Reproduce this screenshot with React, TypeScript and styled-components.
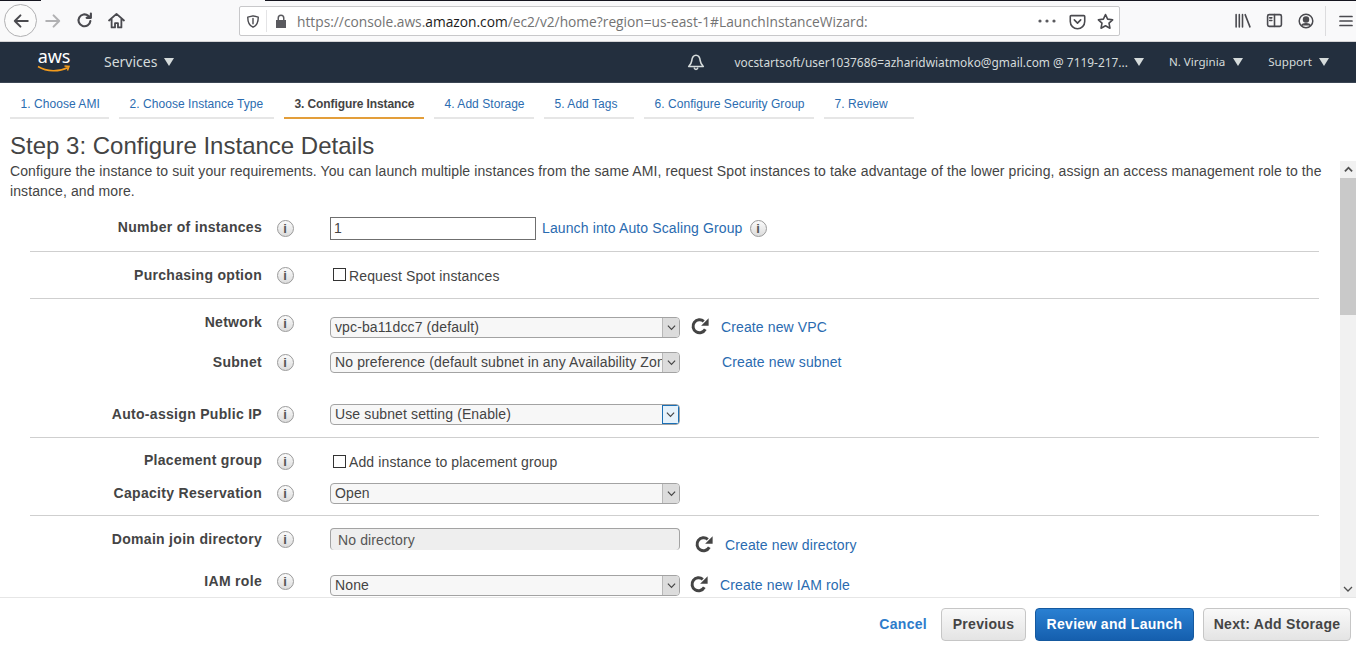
import React from 'react';
import styled, { createGlobalStyle } from 'styled-components';

const Global = createGlobalStyle`
  html, body { margin: 0; padding: 0; background: #fff; overflow: hidden; }
  * { box-sizing: border-box; }
  body { font-family: "Liberation Sans", Arial, sans-serif; color: #444; }
`;
const Page = styled.div`width: 1356px; height: 654px; display: flex; flex-direction: column; overflow: hidden; background: #fff;`;

/* Browser chrome */
const Browser = styled.div`
  height: 42px; flex: none; display: flex; align-items: center; padding-left: 4px;
  background: linear-gradient(to right, #15151f 0 41px, transparent 41px 265px, #15151f 265px) top / 100% 1px no-repeat, #f9f9fa;
  border-bottom: 1px solid #d4d4d6; color: #4a4a4f;
`;
const BackCircle = styled.div`width: 33px; height: 33px; border-radius: 50%; border: 1px solid #b1b1b3; background: #fbfbfb; display: flex; align-items: center; justify-content: center; flex: none;`;
const ToolSlot = styled.div<{ $w: number; $muted?: boolean }>`
  width: ${p => p.$w}px; flex: none; display: flex; align-items: center; justify-content: center;
  color: ${p => (p.$muted ? '#b1b1b3' : 'inherit')};
`;
const UrlBar = styled.div`
  margin-left: 107px; margin-right: 106px; width: 881px; height: 30px; background: #fff; border: 1px solid #c8c8ca; border-radius: 2px;
  display: flex; align-items: center; padding-left: 6px; flex: none; margin-top: 1px;
`;
const UrlDivider = styled.div`width: 1px; height: 22px; background: #e4e4e6; margin: 0 8px 0 6px;`;
const UrlText = styled.div`
  font-family: "Open Sans", "Noto Sans", sans-serif; font-size: 13.75px; color: #737373; margin-left: 10px; flex: 1; white-space: nowrap;
  b { font-weight: 400; color: #1a1a1a; }
`;
const UrlActions = styled.div`display: flex; align-items: center; gap: 11px; padding-right: 5px; color: #4a4a4f;`;
const Dots = styled.svg`margin-right: 2px;`;
const RightTools = styled.div`display: flex; align-items: center; color: #4a4a4f;`;
const ChromeSep = styled.div`width: 1px; height: 30px; background: #dcdcde; margin: 0 12px 0 3px;`;

/* AWS nav */
const Nav = styled.nav`
  height: 41px; flex: none; background: #232f3e; border-bottom: 1px solid #3a4553; display: flex; align-items: center; color: #d5dbdb;
  font-family: "Noto Sans", "Open Sans", sans-serif; font-size: 11.6px; padding-bottom: 1px;
`;
const Logo = styled.div`margin-left: 37px; width: 34px; height: 26px; flex: none; margin-top: -2px;`;
const LogoText = styled.span`display: block; color: #fff; font-family: "Noto Sans", sans-serif; font-size: 18px; line-height: 17px; text-align: center; letter-spacing: -0.2px;`;
const LogoSmile = styled.svg`display: block;`;
const NavItem = styled.div<{ $ml?: number; $size?: number }>`
  display: flex; align-items: center; white-space: nowrap; margin-left: ${p => p.$ml ?? 0}px;
  font-size: ${p => p.$size ?? 11.6}px;
`;
const Triangle = styled.span<{ $ml?: number }>`
  width: 0; height: 0; margin-left: ${p => p.$ml ?? 10}px; margin-top: 1px;
  border-left: 5px solid transparent; border-right: 5px solid transparent; border-top: 8px solid #d5dbdb;
`;
const NavSpacer = styled.div`flex: 1;`;
const NavEnd = styled.div`width: 27px; flex: none;`;
const BellSlot = styled.div`display: flex; align-items: center; margin-right: 29px; color: #d5dbdb;`;

/* Wizard tabs */
const Tabs = styled.div`height: 37px; flex: none; display: flex; gap: 10px; padding-left: 10px;`;
const Tab = styled.div<{ $active?: boolean; $w: number }>`
  width: ${p => p.$w}px; height: 36px; display: flex; align-items: center; padding: 7px 0 0 10.5px;
  font-size: 12px; white-space: nowrap;
  letter-spacing: ${p => (p.$active ? '-0.1px' : '0.05px')};
  color: ${p => (p.$active ? '#444' : '#2b6cb0')};
  font-weight: ${p => (p.$active ? 700 : 400)};
  border-bottom: 2px solid ${p => (p.$active ? '#e39e3a' : '#e6e6e6')};
`;

const Title = styled.h1`margin: 0; padding-left: 10px; height: 41px; flex: none; font-weight: 400; font-size: 24px; line-height: 52px; color: #444; white-space: nowrap;`;

/* Body */
const Body = styled.div`flex: 1; min-height: 0; display: flex; padding-left: 10px; letter-spacing: 0.12px;`;
const Scroller = styled.div`flex: 1; min-width: 0; overflow: hidden;`;
const Description = styled.p`margin: 0; width: 1318px; font-size: 14px; line-height: 20px; color: #444; height: 44px; letter-spacing: 0.1px;`;
const Section = styled.section<{ $h: number; $pt?: number; $last?: boolean }>`
  margin-left: 20px; width: 1289px; height: ${p => p.$h}px; padding-top: ${p => p.$pt ?? 0}px;
  border-bottom: ${p => (p.$last ? 'none' : '1px solid #cfcfcf')};
`;
const Row = styled.div<{ $h: number; $mt?: number }>`
  display: grid; grid-template-columns: 232px 46px 1fr; align-items: center;
  height: ${p => p.$h}px; margin-top: ${p => p.$mt ?? 0}px;
`;
const Label = styled.div<{ $up?: number }>`
  text-align: right; font-size: 14px; font-weight: 700; color: #444; white-space: nowrap; letter-spacing: 0.3px;
  margin-bottom: ${p => p.$up ?? 0}px;
`;
const InfoCell = styled.div<{ $up?: number }>`display: flex; justify-content: center; margin-bottom: ${p => p.$up ?? 0}px;`;
const Info = styled.span`
  width: 17px; height: 17px; border-radius: 50%; border: 1px solid #9a9a9a; flex: none;
  background: linear-gradient(#fbfbfb, #dcdcdc);
  display: inline-flex; align-items: center; justify-content: center;
  font-size: 13px; font-weight: 700; color: #555; line-height: 1; letter-spacing: 0;
`;
const TrailingInfo = styled.span`margin-left: 7px; display: inline-flex;`;
const Control = styled.div`display: flex; align-items: center; margin-left: 22px; min-width: 0;`;
const NumberInput = styled.div`width: 206px; height: 23px; border: 1px solid #6f6f6f; font-size: 14px; line-height: 21px; padding-left: 3px; color: #444; flex: none;`;
const Link = styled.a<{ $ml?: number; $mt?: number }>`font-size: 14px; color: #2a6bb0; white-space: nowrap; margin-left: ${p => p.$ml ?? 0}px; margin-top: ${p => p.$mt ?? 0}px; flex: none;`;
const Check = styled.label<{ $mt?: number }>`display: flex; align-items: center; font-size: 14px; color: #444; margin-left: 3px; white-space: nowrap; margin-top: ${p => p.$mt ?? 0}px;`;
const CheckBox = styled.span`width: 13px; height: 13px; border: 1px solid #333; background: #fff; margin-right: 3px; flex: none; margin-top: -2px;`;
const Select = styled.div`
  width: 350px; height: 21px; flex: none; border: 1px solid #a3a3a3; border-radius: 4px; background: #f7f7f7;
  display: flex; align-items: stretch; overflow: hidden; font-size: 14px; line-height: 19px; color: #444;
`;
const SelectValue = styled.div`flex: 1; min-width: 0; overflow: hidden; white-space: nowrap; padding-left: 4px;`;
const SelectArrow = styled.div<{ $focus?: boolean }>`
  width: 17px; flex: none; display: flex; align-items: center; justify-content: center;
  background: ${p => (p.$focus ? '#e6f2fb' : '#dcdcdc')};
  border: ${p => (p.$focus ? '1px solid #1a6fb5' : 'none')};
  border-left: 1px solid ${p => (p.$focus ? '#1a6fb5' : '#b8b8b8')};
  color: #444;
`;
const Disabled = styled.div`
  width: 350px; height: 22px; flex: none; border: 1px solid #a3a3a3; border-bottom: none; border-radius: 4px; background: #eeeeee;
  font-size: 14px; line-height: 22px; padding-left: 7px; color: #555;
`;
const RefreshSvg = styled.svg<{ $ml: number; $mt?: number }>`
  color: #444; margin-left: ${p => p.$ml}px; margin-top: ${p => p.$mt ?? 0}px; flex: none;
`;

const Scrollbar = styled.div`width: 16px; flex: none; background: #f1f1f1; display: flex; flex-direction: column; align-items: center;`;
const ScrollBtn = styled.div`height: 17px; flex: none; display: flex; align-items: center; justify-content: center; color: #505050;`;
const ScrollThumb = styled.div`height: 137px; width: 100%; background: #c9c9c9; flex: none;`;
const ScrollFill = styled.div`flex: 1;`;

/* Footer */
const Footer = styled.footer`height: 57px; flex: none; border-top: 1px solid #e6e6e6; display: flex; align-items: center; justify-content: flex-end; padding: 0 5px 4px 0;`;
const Cancel = styled.a`font-size: 14px; font-weight: 700; color: #2d7ccb; margin-right: 14px; letter-spacing: 0.3px;`;
const Btn = styled.button<{ $primary?: boolean; $w: number; $ml?: number }>`
  width: ${p => p.$w}px; height: 33px; margin-left: ${p => p.$ml ?? 0}px; border-radius: 4px; padding: 0;
  font-family: "Liberation Sans", Arial, sans-serif; font-size: 14px; font-weight: 700; letter-spacing: 0.3px;
  color: ${p => (p.$primary ? '#fff' : '#444')};
  border: 1px solid ${p => (p.$primary ? '#15599f' : '#c6c6c6')};
  background: ${p => (p.$primary ? 'linear-gradient(#2a80d2, #155fae)' : 'linear-gradient(#f9f9f9, #e4e4e4)')};
`;

const Chevron = ({ up, s = 9 }: { up?: boolean; s?: number }) => (
  <svg width={s} height={s} viewBox="0 0 10 10" fill="none" stroke="currentColor" strokeWidth={up ? 2 : 1.3}>
    <path d={up ? 'M1 7l4-4 4 4' : 'M1 3l4 4 4-4'} />
  </svg>
);
const Ic = ({ w = 16, h = 16, sw = 1.8, children }: { w?: number; h?: number; sw?: number; children: React.ReactNode }) => (
  <svg width={w} height={h} viewBox="0 0 16 16" fill="none" stroke="currentColor" strokeWidth={sw} strokeLinecap="round" strokeLinejoin="round">{children}</svg>
);
const Refresh = ({ ml, mt }: { ml: number; mt?: number }) => (
  <RefreshSvg $ml={ml} $mt={mt} width="18" height="18" viewBox="0 0 18 18" fill="none">
    <path d="M14.300 12.300A6.500 6.500 0 1 1 12.800 4.300" stroke="currentColor" strokeWidth="3" />
    <path d="M17.600 1.200V8.700H10.100z" fill="currentColor" />
  </RefreshSvg>
);
const DropSelect = ({ value, focus }: { value: string; focus?: boolean }) => (
  <Select>
    <SelectValue>{value}</SelectValue>
    <SelectArrow $focus={focus}><Chevron /></SelectArrow>
  </Select>
);
const InfoIcon = () => <Info>i</Info>;

export default function App() {
  return (
    <Page>
      <Global />
      <Browser>
        <BackCircle>
          <Ic w={18} h={18}><path d="M14 8H2.5M7.5 3L2.5 8l5 5" /></Ic>
        </BackCircle>
        <ToolSlot $w={31} $muted>
          <Ic w={18} h={18}><path d="M2 8h11.5M8.5 3l5 5-5 5" /></Ic>
        </ToolSlot>
        <ToolSlot $w={32}>
          <Ic w={17} h={17} sw={2}><path d="M13.5 8.5A5.6 5.6 0 1 1 11.6 3.6L14 5.5M14 1.5v4h-4" /></Ic>
        </ToolSlot>
        <ToolSlot $w={32}>
          <Ic w={17} h={17} sw={1.7}><path d="M1 8l7-6.2L15 8M3.4 6.5V14.5h3.2v-4h2.8v4h3.2V6.5" /></Ic>
        </ToolSlot>
        <UrlBar>
          <Ic w={14} h={15} sw={1.6}><path d="M8 1.500l6 1.500c0 6-1.500 9.500-6 11.500C3.500 12.500 2 9 2 3zM8 4.500v6" /></Ic>
          <UrlDivider />
          <svg width="12" height="14" viewBox="0 0 12 14" fill="#5a5a5f"><path d="M1 6h1.500V4a3.500 3.500 0 0 1 7 0v2H11v8H1zM4 6h4V4a2 2 0 0 0-4 0z" /></svg>
          <UrlText>https://console.aws.<b>amazon.com</b>/ec2/v2/home?region=us-east-1#LaunchInstanceWizard:</UrlText>
          <UrlActions>
            <Dots width="18" height="4" viewBox="0 0 18 4" fill="#5a5a5f"><circle cx="2" cy="2" r="1.600" /><circle cx="9" cy="2" r="1.600" /><circle cx="16" cy="2" r="1.600" /></Dots>
            <Ic w={17} h={17} sw={1.5}><path d="M2 2.500h12a.8.8 0 0 1 .8.8V8A6.800 6.800 0 0 1 1.200 8V3.300a.8.8 0 0 1 .8-.8zM5 6.500l3 3 3-3" /></Ic>
            <Ic w={17} h={17} sw={1.5}><path d="M8 1.500l2 4.300 4.700.6-3.400 3.200.9 4.700L8 12l-4.200 2.300.9-4.700L1.300 6.400 6 5.800z" /></Ic>
          </UrlActions>
        </UrlBar>
        <RightTools>
          <ToolSlot $w={32}>
            <Ic w={17} h={17} sw={1.5}><path d="M2 2.500v11.500M5 2.500v11.500M8 2.500v11.500M10.500 2.500L15 14" /></Ic>
          </ToolSlot>
          <ToolSlot $w={32}>
            <Ic w={17} h={17} sw={1.5}><rect x="1.500" y="2.500" width="13" height="11" rx="1.500" /><path d="M8 2.500v11M3.500 5.500h2M3.500 8h2" /></Ic>
          </ToolSlot>
          <ToolSlot $w={32}>
            <Ic w={16} h={16} sw={1.5}><circle cx="8" cy="8" r="6.800" /><circle cx="8" cy="6.500" r="2.500" fill="currentColor" /><path d="M3.800 12.500c1-2.500 7.400-2.500 8.400 0" fill="currentColor" /></Ic>
          </ToolSlot>
          <ChromeSep />
          <Ic w={16} h={16} sw={1.7}><path d="M2 3.500h12M2 8h12M2 12.500h12" /></Ic>
        </RightTools>
      </Browser>

      <Nav>
        <Logo>
          <LogoText>aws</LogoText>
          <LogoSmile width="34" height="9" viewBox="0 0 34 9" fill="none" stroke="#f29b1d" strokeWidth="1.500">
            <path d="M1 1.500c9 5.500 21 5.500 30 1M27.500 1l4.500.5-1.500 4" />
          </LogoSmile>
        </Logo>
        <NavItem $ml={33} $size={14}>Services<Triangle $ml={7} /></NavItem>
        <NavSpacer />
        <BellSlot>
          <Ic w={18} h={18} sw={1.4}><path d="M8 2c-3 0-3.500 2.500-3.800 5S3 10.500 1.500 12h13C13 10.500 12.100 9.500 11.800 7S11 2 8 2zM6.500 13.500c.3 1.400 2.700 1.400 3 0" /></Ic>
        </BellSlot>
        <NavItem $size={11.9}>vocstartsoft/user1037686=azharidwiatmoko@gmail.com @ 7119-217...<Triangle $ml={6} /></NavItem>
        <NavItem $ml={25}>N. Virginia<Triangle $ml={8} /></NavItem>
        <NavItem $ml={25}>Support<Triangle $ml={7} /></NavItem>
        <NavEnd />
      </Nav>

      <Tabs>
        <Tab $w={99}>1. Choose AMI</Tab>
        <Tab $w={155}>2. Choose Instance Type</Tab>
        <Tab $w={140} $active>3. Configure Instance</Tab>
        <Tab $w={100}>4. Add Storage</Tab>
        <Tab $w={90}>5. Add Tags</Tab>
        <Tab $w={170}>6. Configure Security Group</Tab>
        <Tab $w={90}>7. Review</Tab>
      </Tabs>

      <Title>Step 3: Configure Instance Details</Title>

      <Body>
        <Scroller>
          <Description>
            Configure the instance to suit your requirements. You can launch multiple instances from the same AMI, request Spot instances to take advantage of the lower pricing, assign an access management role to the instance, and more.
          </Description>
          <Section $h={47}>
            <Row $h={46}>
              <Label $up={2}>Number of instances</Label>
              <InfoCell><InfoIcon /></InfoCell>
              <Control>
                <NumberInput>1</NumberInput>
                <Link $ml={6}>Launch into Auto Scaling Group</Link>
                <TrailingInfo><InfoIcon /></TrailingInfo>
              </Control>
            </Row>
          </Section>
          <Section $h={47}>
            <Row $h={46}>
              <Label>Purchasing option</Label>
              <InfoCell><InfoIcon /></InfoCell>
              <Control><Check $mt={1}><CheckBox />Request Spot instances</Check></Control>
            </Row>
          </Section>
          <Section $h={139} $pt={11}>
            <Row $h={34}>
              <Label $up={10}>Network</Label>
              <InfoCell $up={8}><InfoIcon /></InfoCell>
              <Control>
                <DropSelect value="vpc-ba11dcc7 (default)" />
                <Refresh ml={11} mt={-2} />
                <Link $ml={12}>Create new VPC</Link>
              </Control>
            </Row>
            <Row $h={36}>
              <Label>Subnet</Label>
              <InfoCell><InfoIcon /></InfoCell>
              <Control>
                <DropSelect value="No preference (default subnet in any Availability Zone)" />
                <Link $ml={42}>Create new subnet</Link>
              </Control>
            </Row>
            <Row $h={34} $mt={17}>
              <Label>Auto-assign Public IP</Label>
              <InfoCell><InfoIcon /></InfoCell>
              <Control><DropSelect value="Use subnet setting (Enable)" focus /></Control>
            </Row>
          </Section>
          <Section $h={78} $pt={5}>
            <Row $h={36}>
              <Label $up={2}>Placement group</Label>
              <InfoCell><InfoIcon /></InfoCell>
              <Control><Check $mt={2}><CheckBox />Add instance to placement group</Check></Control>
            </Row>
            <Row $h={28}>
              <Label>Capacity Reservation</Label>
              <InfoCell><InfoIcon /></InfoCell>
              <Control><DropSelect value="Open" /></Control>
            </Row>
          </Section>
          <Section $h={90} $pt={7} $last>
            <Row $h={32}>
              <Label>Domain join directory</Label>
              <InfoCell><InfoIcon /></InfoCell>
              <Control>
                <Disabled>No directory</Disabled>
                <Refresh ml={15} mt={10} />
                <Link $ml={12} $mt={11}>Create new directory</Link>
              </Control>
            </Row>
            <Row $h={30} $mt={15}>
              <Label $up={8}>IAM role</Label>
              <InfoCell $up={8}><InfoIcon /></InfoCell>
              <Control>
                <DropSelect value="None" />
                <Refresh ml={10} mt={-2} />
                <Link $ml={12}>Create new IAM role</Link>
              </Control>
            </Row>
          </Section>
        </Scroller>
        <Scrollbar>
          <ScrollBtn><Chevron up /></ScrollBtn>
          <ScrollThumb />
          <ScrollFill />
          <ScrollBtn><Chevron s={10} /></ScrollBtn>
        </Scrollbar>
      </Body>

      <Footer>
        <Cancel>Cancel</Cancel>
        <Btn $w={85}>Previous</Btn>
        <Btn $primary $w={159} $ml={9}>Review and Launch</Btn>
        <Btn $w={148} $ml={9}>Next: Add Storage</Btn>
      </Footer>
    </Page>
  );
}
